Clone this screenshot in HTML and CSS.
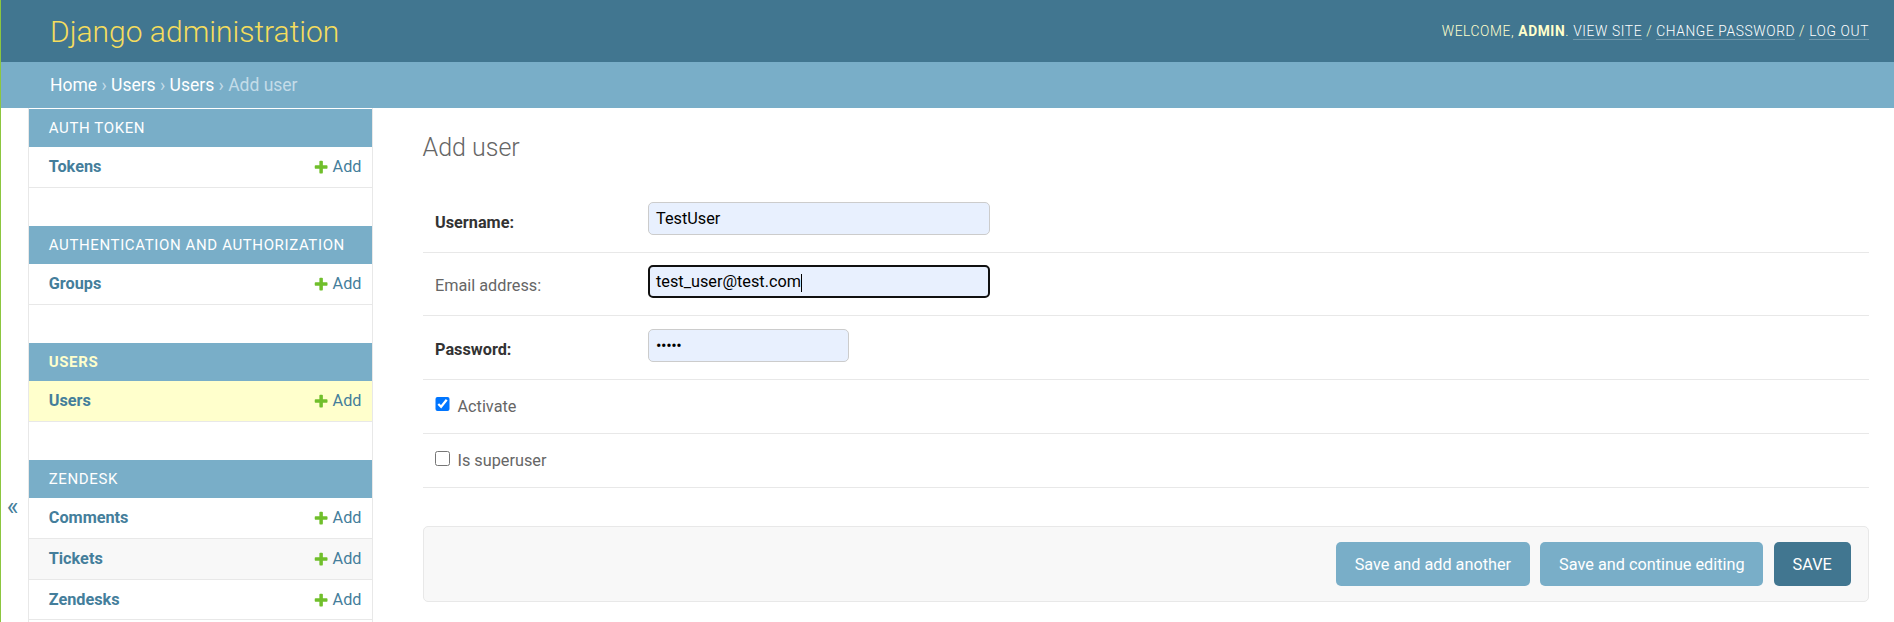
FILE: index.html
```html
<!DOCTYPE html>
<html lang="en">
<head>
<meta charset="utf-8">
<title>Add user | Django site admin</title>
<link rel="stylesheet" href="styles.css">
</head>
<body>
<div class="window-edge"></div>
<div class="container">
  <header class="header">
    <div class="branding">
      <h1 class="site-name"><a href="#">Django administration</a></h1>
    </div>
    <div class="user-tools">
      Welcome, <strong>admin</strong>. <a href="#">View site</a> / <a href="#">Change password</a> / <a href="#">Log out</a>
    </div>
  </header>

  <nav class="breadcrumbs">
    <a href="#">Home</a> › <a href="#">Users</a> › <a href="#">Users</a> › Add user
  </nav>

  <div class="main">
    <div class="toggle-nav"><span class="toggle-glyph">«</span></div>

    <nav class="nav-sidebar">
      <div class="app">
        <h2 class="app-caption"><a href="#">Auth Token</a></h2>
        <div class="models">
          <div class="model-row">
            <a class="model-name" href="#">Tokens</a>
            <a class="model-add" href="#"><svg class="plus" viewBox="0 0 1792 1792"><path d="M1600 796v192q0 40-28 68t-68 28h-416v416q0 40-28 68t-68 28h-192q-40 0-68-28t-28-68v-416h-416q-40 0-68-28t-28-68v-192q0-40 28-68t68-28h416v-416q0-40 28-68t68-28h192q40 0 68 28t28 68v416h416q40 0 68 28t28 68z"/></svg>Add</a>
          </div>
        </div>
      </div>

      <div class="app">
        <h2 class="app-caption"><a href="#">Authentication and Authorization</a></h2>
        <div class="models">
          <div class="model-row">
            <a class="model-name" href="#">Groups</a>
            <a class="model-add" href="#"><svg class="plus" viewBox="0 0 1792 1792"><path d="M1600 796v192q0 40-28 68t-68 28h-416v416q0 40-28 68t-68 28h-192q-40 0-68-28t-28-68v-416h-416q-40 0-68-28t-28-68v-192q0-40 28-68t68-28h416v-416q0-40 28-68t68-28h192q40 0 68 28t28 68v416h416q40 0 68 28t28 68z"/></svg>Add</a>
          </div>
        </div>
      </div>

      <div class="app current-app">
        <h2 class="app-caption"><a href="#">Users</a></h2>
        <div class="models">
          <div class="model-row current-model">
            <a class="model-name" href="#">Users</a>
            <a class="model-add" href="#"><svg class="plus" viewBox="0 0 1792 1792"><path d="M1600 796v192q0 40-28 68t-68 28h-416v416q0 40-28 68t-68 28h-192q-40 0-68-28t-28-68v-416h-416q-40 0-68-28t-28-68v-192q0-40 28-68t68-28h416v-416q0-40 28-68t68-28h192q40 0 68 28t28 68v416h416q40 0 68 28t28 68z"/></svg>Add</a>
          </div>
        </div>
      </div>

      <div class="app">
        <h2 class="app-caption"><a href="#">Zendesk</a></h2>
        <div class="models">
          <div class="model-row">
            <a class="model-name" href="#">Comments</a>
            <a class="model-add" href="#"><svg class="plus" viewBox="0 0 1792 1792"><path d="M1600 796v192q0 40-28 68t-68 28h-416v416q0 40-28 68t-68 28h-192q-40 0-68-28t-28-68v-416h-416q-40 0-68-28t-28-68v-192q0-40 28-68t68-28h416v-416q0-40 28-68t68-28h192q40 0 68 28t28 68v416h416q40 0 68 28t28 68z"/></svg>Add</a>
          </div>
          <div class="model-row">
            <a class="model-name" href="#">Tickets</a>
            <a class="model-add" href="#"><svg class="plus" viewBox="0 0 1792 1792"><path d="M1600 796v192q0 40-28 68t-68 28h-416v416q0 40-28 68t-68 28h-192q-40 0-68-28t-28-68v-416h-416q-40 0-68-28t-28-68v-192q0-40 28-68t68-28h416v-416q0-40 28-68t68-28h192q40 0 68 28t28 68v416h416q40 0 68 28t28 68z"/></svg>Add</a>
          </div>
          <div class="model-row">
            <a class="model-name" href="#">Zendesks</a>
            <a class="model-add" href="#"><svg class="plus" viewBox="0 0 1792 1792"><path d="M1600 796v192q0 40-28 68t-68 28h-416v416q0 40-28 68t-68 28h-192q-40 0-68-28t-28-68v-416h-416q-40 0-68-28t-28-68v-192q0-40 28-68t68-28h416v-416q0-40 28-68t68-28h192q40 0 68 28t28 68v416h416q40 0 68 28t28 68z"/></svg>Add</a>
          </div>
        </div>
      </div>
    </nav>

    <main class="content">
      <h1 class="page-title">Add user</h1>
      <form class="user-form">
        <fieldset class="fieldset">
          <div class="form-row">
            <div class="field-line">
              <label class="field-label required">Username:</label>
              <div class="text-input wide">TestUser</div>
            </div>
          </div>
          <div class="form-row">
            <div class="field-line">
              <label class="field-label">Email address:</label>
              <div class="text-input wide focused">test_user@test.com<span class="caret"></span></div>
            </div>
          </div>
          <div class="form-row">
            <div class="field-line">
              <label class="field-label required">Password:</label>
              <div class="text-input narrow"><span class="dots">•••••</span></div>
            </div>
          </div>
          <div class="form-row">
            <div class="checkbox-row">
              <input class="checkbox" type="checkbox" checked>
              <label class="checkbox-label">Activate</label>
            </div>
          </div>
          <div class="form-row">
            <div class="checkbox-row">
              <input class="checkbox" type="checkbox">
              <label class="checkbox-label">Is superuser</label>
            </div>
          </div>
        </fieldset>

        <div class="submit-row">
          <button type="button" class="button">Save and add another</button>
          <button type="button" class="button">Save and continue editing</button>
          <button type="button" class="button default">SAVE</button>
        </div>
      </form>
    </main>
  </div>
</div>
</body>
</html>
```

FILE: styles.css
```css
* {
  box-sizing: border-box;
}

html,
body {
  margin: 0;
  padding: 0;
  height: 100%;
  overflow: hidden;
}

body {
  font-family: Roboto, "Liberation Sans", Arial, sans-serif;
  font-size: 17.5px;
  color: #333;
  background: #fff;
}

a {
  color: #447e9b;
  text-decoration: none;
}

.window-edge {
  position: fixed;
  left: 0;
  top: 0;
  bottom: 0;
  width: 1px;
  background: #8cc63f;
  z-index: 10;
}

/* Header */
.header {
  display: flex;
  justify-content: space-between;
  align-items: center;
  height: 62px;
  padding: 0 25px 0 50px;
  background: #417690;
  color: #ffc;
}

.site-name {
  margin: 0;
  font-size: 30px;
  font-weight: 300;
  line-height: normal;
}

.site-name a {
  color: #f5dd5d;
}

.user-tools {
  font-size: 13.75px;
  font-weight: 300;
  letter-spacing: 0.625px;
  text-transform: uppercase;
  color: #ffc;
}

.user-tools strong {
  font-weight: 700;
}

.user-tools a {
  color: #fff;
  border-bottom: 1px solid rgba(255, 255, 255, 0.25);
}

/* Breadcrumbs */
.breadcrumbs {
  padding: 12.5px 50px;
  background: #79aec8;
  color: #c4dce8;
  font-size: 17.5px;
  line-height: 20.5px;
}

.breadcrumbs a {
  color: #fff;
}

/* Main */
.main {
  display: flex;
  min-height: 514.5px;
}

.toggle-nav {
  flex: 0 0 28.75px;
  display: flex;
  justify-content: center;
  align-items: flex-start;
  padding: 386px 2.5px 0 0;
  border-right: 1px solid #e8e8e8;
  color: #447e9b;
  font-size: 25px;
  line-height: 25px;
}

.nav-sidebar {
  flex: 0 0 343.75px;
  padding-top: 1.5px;
  border-right: 1px solid #e8e8e8;
}

.app {
  margin-bottom: 38.2px;
}

.app:last-child {
  margin-bottom: 0;
}

.app-caption {
  margin: 0;
  padding: 10px 10px 10px 20px;
  background: #79aec8;
  font-size: 15px;
  font-weight: 400;
  line-height: 18px;
  letter-spacing: 0.625px;
  text-transform: uppercase;
}

.app-caption a {
  color: #fff;
}

.current-app .app-caption a {
  color: #ffc;
  font-weight: 700;
}

.model-row {
  display: flex;
  align-items: baseline;
  border-bottom: 1px solid #e8e8e8;
  font-size: 16.25px;
  line-height: 19.8px;
  background: #fff;
}

.models .model-row:nth-child(even) {
  background: #f8f8f8;
}

.models .model-row.current-model {
  background: #ffc;
}

.model-name {
  flex: 1;
  padding: 10px 10px 10px 20px;
  font-weight: 700;
}

.model-add {
  padding: 10px;
  white-space: nowrap;
}

.plus {
  width: 16.25px;
  height: 16.25px;
  margin-right: 3.75px;
  vertical-align: -3.6px;
  fill: #70bf2b;
}

/* Content */
.content {
  flex: 1;
  min-width: 0;
  padding: 25px 25px 18px 50px;
}

.page-title {
  margin: 0 0 25.7px;
  font-size: 25px;
  font-weight: 300;
  line-height: 30.85px;
  color: #666;
}

.fieldset {
  margin: 0 0 38.1px;
  padding: 0;
  border: 0;
  min-width: 0;
}

.form-row {
  padding: 12.5px;
  border-bottom: 1px solid #e8e8e8;
  font-size: 16.25px;
}

.field-line {
  display: flex;
  align-items: flex-start;
  min-height: 37.5px;
}

.field-label {
  flex: none;
  width: 212.5px;
  padding: 11px 12.5px 0 0;
  line-height: 19px;
  color: #666;
}

.field-label.required {
  font-weight: 700;
  color: #333;
}

.text-input {
  height: 33.4px;
  padding: 0 7.5px;
  border: 1px solid #ccc;
  border-radius: 5px;
  background: #e8f0fe;
  color: #000;
  font-size: 16.25px;
  line-height: 31.4px;
  white-space: nowrap;
}

.text-input.wide {
  width: 342px;
}

.text-input.narrow {
  width: 201.5px;
}

.text-input.focused {
  border: 2px solid #101010;
  padding: 0 6.5px;
  line-height: 29.4px;
}

.caret {
  display: inline-block;
  width: 1px;
  height: 18.3px;
  margin-left: 0.5px;
  background: #000;
  vertical-align: -5px;
}

.dots {
  font-size: 16.25px;
  letter-spacing: -0.4px;
}

.checkbox-row {
  display: flex;
  align-items: center;
  min-height: 28.3px;
}

.checkbox {
  width: 14.5px;
  height: 14.5px;
  margin: 0 8px 4px 0;
  flex: none;
}

.checkbox-label {
  color: #666;
  line-height: 19px;
}

/* Submit row */
.submit-row {
  display: flex;
  justify-content: flex-end;
  gap: 10.5px;
  padding: 15px 17.5px;
  background: #f8f8f8;
  border: 1px solid #e8e8e8;
  border-radius: 5px;
}

.button {
  height: 43.75px;
  padding: 0 18.75px;
  border: 0;
  border-radius: 5px;
  background: #79aec8;
  color: #fff;
  font-family: Roboto, "Liberation Sans", Arial, sans-serif;
  font-size: 16.25px;
  font-weight: 400;
  cursor: pointer;
}

.button.default {
  background: #417690;
}
```
